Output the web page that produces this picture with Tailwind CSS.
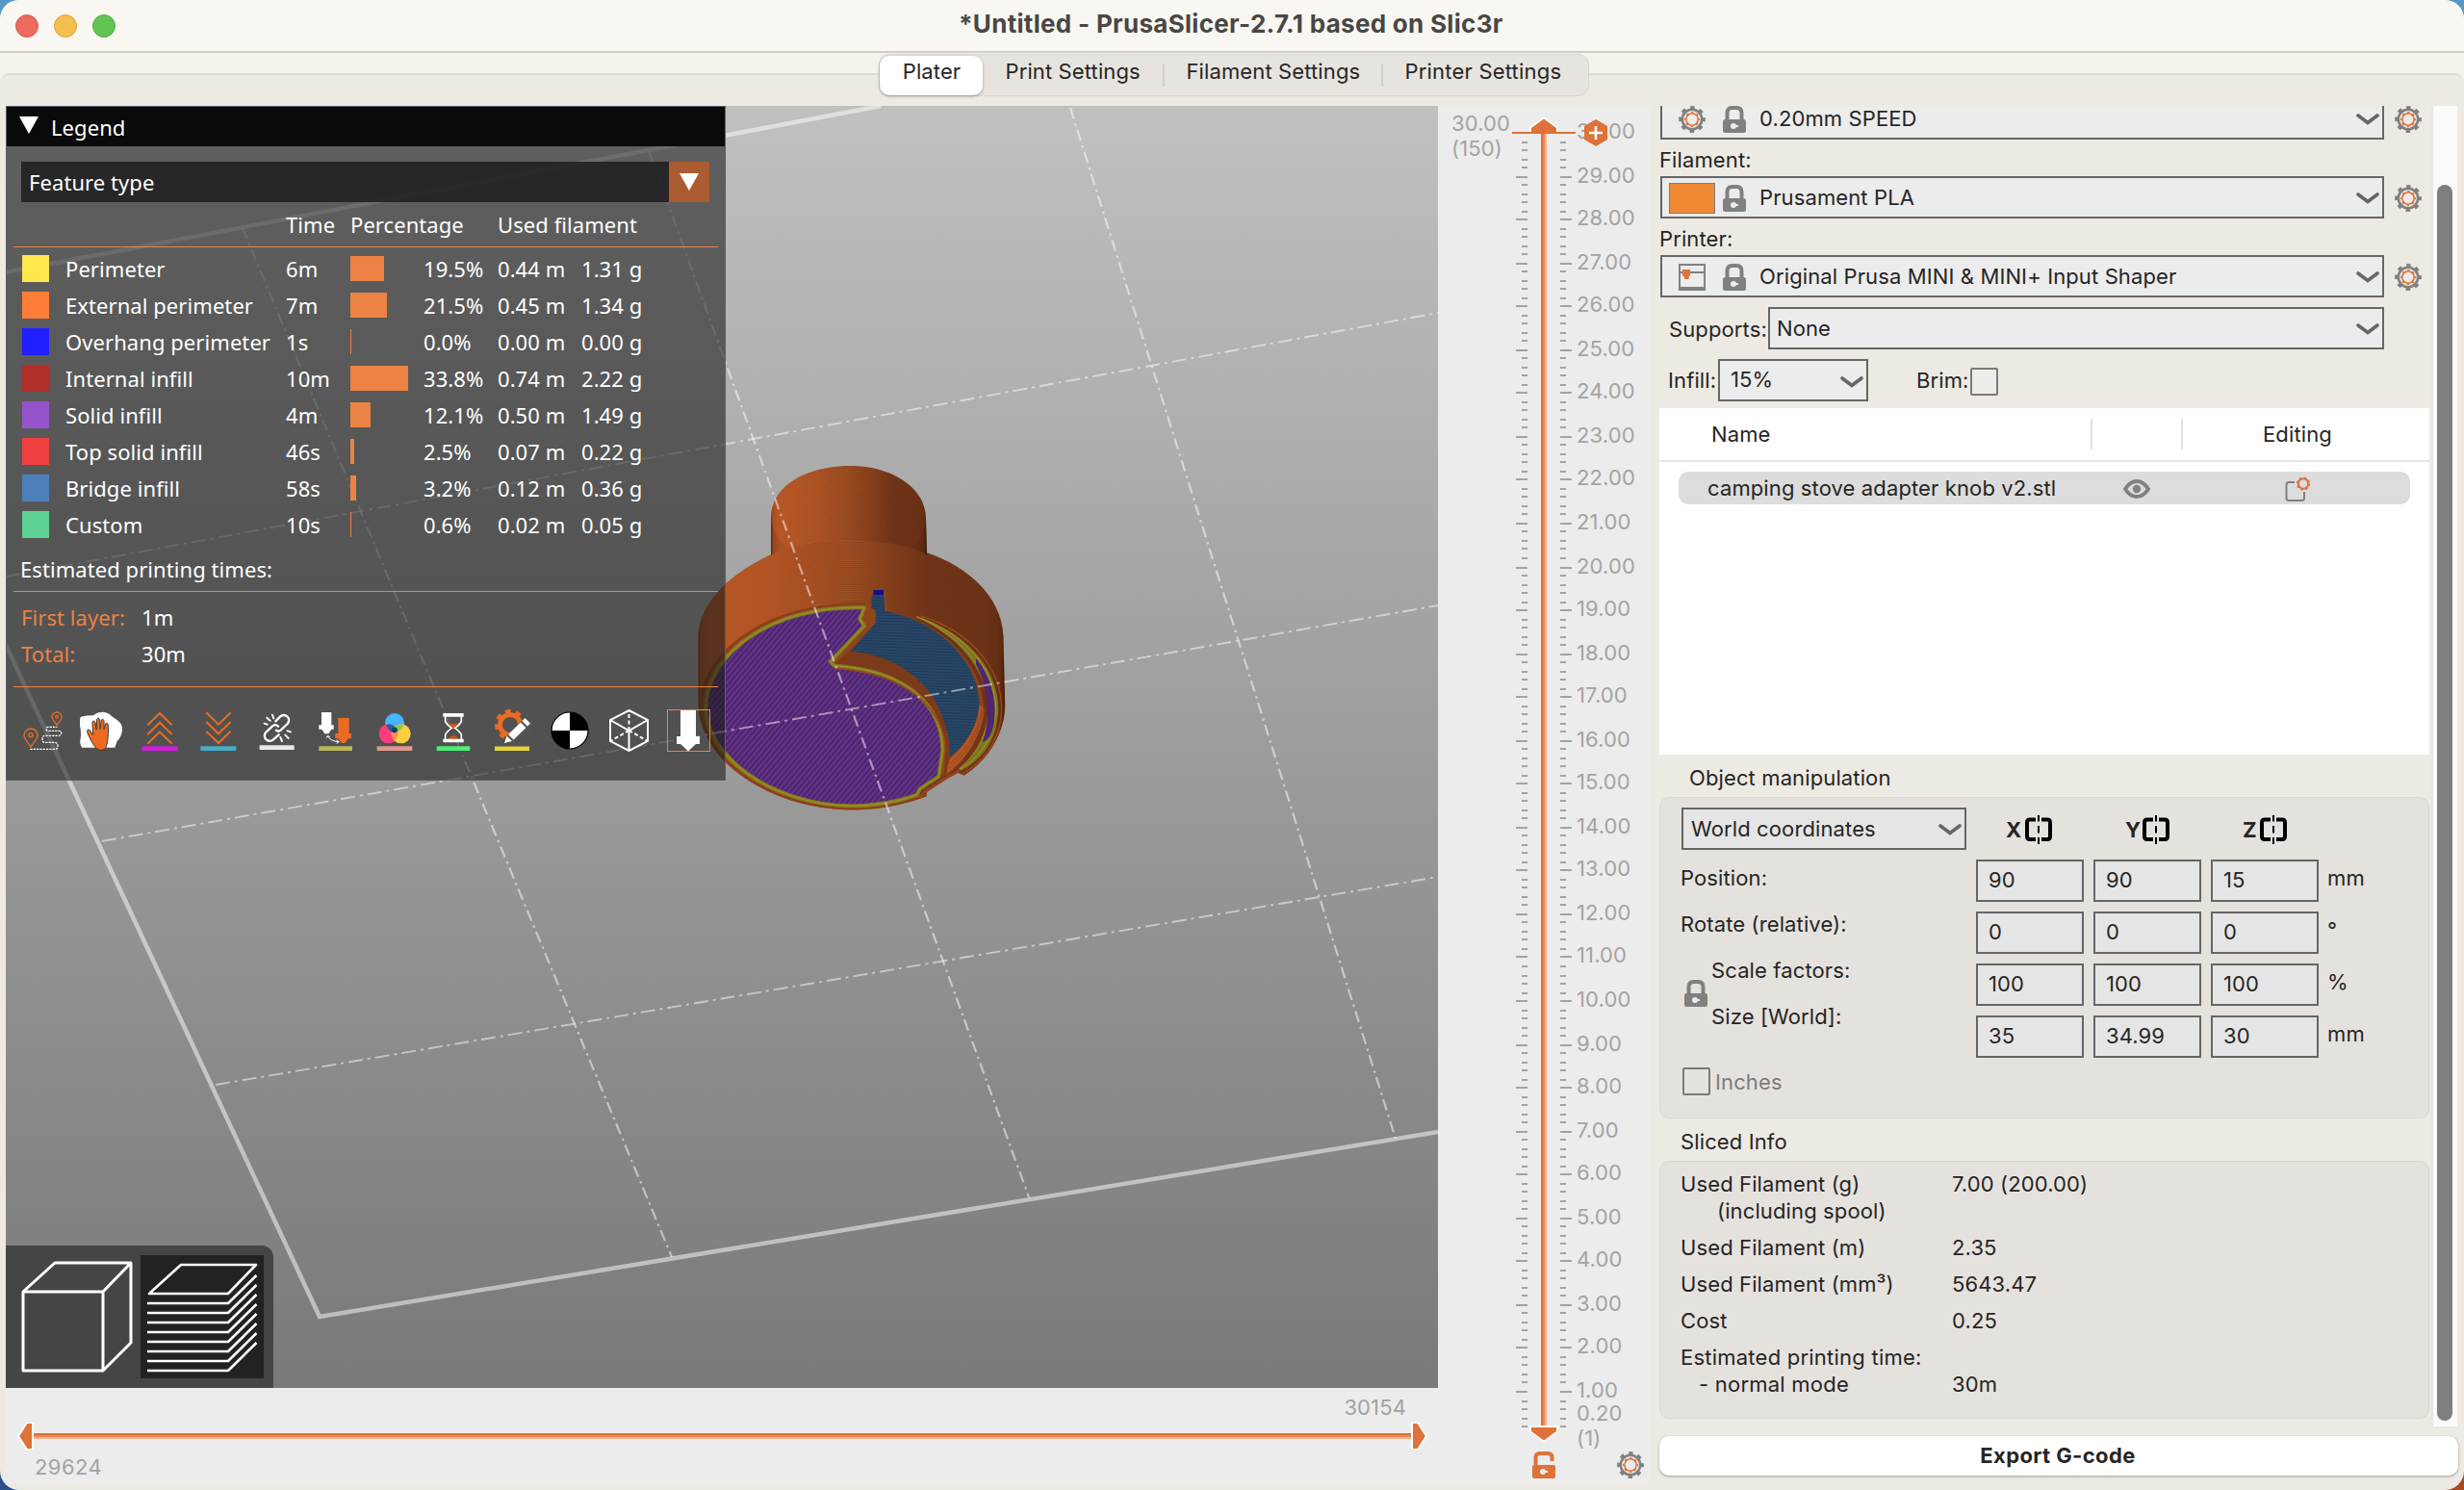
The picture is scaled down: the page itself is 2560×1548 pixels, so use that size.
<!DOCTYPE html>
<html lang="en">
<head>
<meta charset="utf-8">
<title>PrusaSlicer</title>
<script src="https://cdn.jsdelivr.net/npm/@tailwindcss/browser@4"></script>
</head>
<body class="w-[2560px] h-[1548px] overflow-hidden bg-[linear-gradient(180deg,#5797c8_50%,transparent_50%),linear-gradient(90deg,#2b4f86_50%,#a84a22_50%)] font-['Inter',sans-serif] text-[22px] tracking-[0.12px] text-[#262524]">
<svg class="hidden">
  <symbol id="gear" viewBox="0 0 28 28">
    <g fill="none">
      <circle cx="14" cy="14" r="10.2" stroke="#808080" stroke-width="2.6"/>
      <circle cx="14" cy="14" r="12.2" stroke="#808080" stroke-width="3.4" stroke-dasharray="4.4 5.18" stroke-dashoffset="2.2"/>
      <circle cx="14" cy="14" r="6.2" stroke="#de7238" stroke-width="1.5"/>
      <circle cx="14" cy="14" r="7.3" stroke="#de7238" stroke-width="1.4" stroke-dasharray="2.2 3.53" stroke-dashoffset="1.1"/>
    </g>
  </symbol>
  <symbol id="lock" viewBox="0 0 24 28">
    <path d="M4.5 15V7.5Q4.5 2 9.500 2H14.500Q19.500 2 19.500 7.500V15" fill="none" stroke="#808080" stroke-width="4"/>
    <rect y="14" width="24" height="14" rx="2.500" fill="#808080"/>
    <circle cx="11" cy="21" r="3" fill="#ececec"/><rect x="11" y="20" width="5" height="2" fill="#ececec"/>
  </symbol>
  <symbol id="chev" viewBox="0 0 24 12"><path d="M2 2l10 7.500L22 2" fill="none" stroke="#666" stroke-width="3.600" stroke-linecap="round"/></symbol>
  <symbol id="mirror" viewBox="0 0 28 30">
    <path d="M11 4.500H5Q2 4.500 2 7.500V22Q2 25 5 25H11M17 4.500H23Q26 4.500 26 7.500V22Q26 25 23 25H17" fill="none" stroke="#000" stroke-width="4"/>
    <path d="M14 0V6.500M14 11V18.500M14 23V30" stroke="#000" stroke-width="2"/>
  </symbol>
</svg>

<div class="flex h-[1548px] flex-col overflow-hidden rounded-[20px] bg-[#edeae4]">
  <header class="flex h-[55px] shrink-0 items-center border-b-2 border-[#d0cdc8] bg-[#faf7f2] pl-4">
    <div class="flex w-[980px] gap-4">
      <span class="size-6 rounded-full border border-[#d9574b] bg-[#ed6a5e]"></span>
      <span class="size-6 rounded-full border border-[#daa23b] bg-[#f5bf4f]"></span>
      <span class="size-6 rounded-full border border-[#4fab42] bg-[#61c554]"></span>
    </div>
    <h1 class="mb-1 text-[26px] leading-[48px] font-bold tracking-[0.3px] whitespace-nowrap text-[#484745]">*Untitled - PrusaSlicer-2.7.1 based on Slic3r</h1>
  </header>
  <nav class="flex h-[55px] shrink-0 flex-col bg-[#f5f2ec] pt-[21px]">
    <div class="flex h-[34px] justify-center rounded-t-[10px] border-t-2 border-[#dfdcd6] bg-[#edeae4]">
      <div class="-mt-[22px] ml-[3px] flex h-[44px] w-[738px] rounded-[11px] border border-[#dad7d2] bg-[#e7e4df]">
        <div class="mt-px flex h-[41px] w-[107px] justify-center rounded-[10px] bg-white pl-[2px] leading-[32px] shadow-[0_1px_3px_rgba(0,0,0,0.35)]">Plater</div>
        <div class="ml-[24px] w-[163px] leading-[34px]">Print Settings</div>
        <div class="mt-[9px] h-6 w-[2px] bg-[#d3d0cb]"></div>
        <div class="ml-[23px] w-[202px] leading-[34px]">Filament Settings</div>
        <div class="mt-[9px] h-6 w-[2px] bg-[#d3d0cb]"></div>
        <div class="ml-[23px] leading-[34px] tracking-[0.2px]">Printer Settings</div>
      </div>
    </div>
  </nav>

  <main class="flex min-h-0 flex-1 pl-[6px]">
    <!-- 3D preview with move slider -->
    <section class="flex h-[1432px] w-[1488px] shrink-0 flex-col bg-[#ececec]">
      <div class="relative h-[1332px] overflow-hidden">
        <svg class="block" width="1488" height="1332" viewBox="6 110 1488 1332">
          <defs>
            <linearGradient id="bg" x1="0" y1="0" x2="0" y2="1"><stop offset="0" stop-color="#c0c0c0"/><stop offset="1" stop-color="#797979"/></linearGradient>
            <linearGradient id="neck" gradientUnits="userSpaceOnUse" x1="303" y1="0" x2="789" y2="0"><stop offset="0" stop-color="#c45d29"/><stop offset=".25" stop-color="#b75827"/><stop offset=".5" stop-color="#9f4d22"/><stop offset=".74" stop-color="#7d3b1b"/><stop offset=".76" stop-color="#743619"/><stop offset="1" stop-color="#723518"/></linearGradient>
            <linearGradient id="body" gradientUnits="userSpaceOnUse" x1="76" y1="0" x2="1033" y2="0"><stop offset="0" stop-color="#c45d29"/><stop offset=".25" stop-color="#ba5827"/><stop offset=".5" stop-color="#a04e22"/><stop offset=".68" stop-color="#803c1b"/><stop offset=".76" stop-color="#743619"/><stop offset="1" stop-color="#723518"/></linearGradient>
            <pattern id="hatch" width="13" height="13" patternUnits="userSpaceOnUse" patternTransform="rotate(-50)"><rect width="13" height="13" fill="#63338a"/><rect width="13" height="6" fill="#4a2468"/></pattern>
            <pattern id="hatchb" width="12" height="9" patternUnits="userSpaceOnUse" patternTransform="rotate(2)"><rect width="12" height="9" fill="#284665"/><rect width="12" height="3" fill="#203b59"/></pattern>
            <clipPath id="cn"><path d="M303 350V230C305 130 420 72 550 72S785 140 786 235L789 350C700 290 400 290 303 350Z"/></clipPath>
            <clipPath id="cb"><path id="bp" d="M76 600C82 510 150 420 305 347C400 290 700 290 789 343C930 390 1022 490 1027 600L1033 820C1030 905 985 985 905 1037L886 1028L790 1078L788 1102C710 1132 630 1145 550 1145C300 1140 85 980 76 820Z"/></clipPath>
          </defs>
          <rect x="6" y="110" width="1488" height="1332" fill="url(#bg)"/>
          <g fill="none" stroke="#fff" stroke-opacity=".5" stroke-width="4.500">
            <path d="M6 283L915 110M6 670L332 1368L1494 1176"/>
          </g>
          <g transform="translate(700 460) scale(.33333)">
            <use href="#bp" fill="url(#body)"/>
            <g id="bodyArcs" clip-path="url(#cb)" fill="none" stroke="#000" stroke-opacity=".16" stroke-width="2"></g>
            <path d="M303 350V230C305 130 420 72 550 72S785 140 786 235L789 350C700 290 400 290 303 350Z" fill="url(#neck)"/>
            <g id="neckArcs" clip-path="url(#cn)" fill="none" stroke="#000" stroke-opacity=".16" stroke-width="2"></g>
            <!-- rim of the bottom face -->
            <path d="M600 503C300 495 85 650 84 830C90 980 290 1138 553 1138C640 1138 720 1122 786 1098" fill="none" stroke="#8a4019" stroke-width="10"/>
            <path d="M600 508C300 500 92 655 90 830C96 975 290 1133 553 1134C640 1134 720 1118 782 1092" fill="none" stroke="#a04b20" stroke-width="3"/>
            <!-- cut-out -->
            <path d="M617 478L657 476L660 523C830 555 970 690 965 830C960 910 915 990 850 1038L830 1035L498 690L629 562L629 522L612 515Z" fill="#8a4119"/>
            <path d="M617 478L657 476L659 525C830 555 952 690 952 810C950 880 910 940 860 982C865 850 780 670 550 650L629 562V522L616 515Z" fill="url(#hatchb)"/>
            <path d="M858 986C910 944 950 885 953 815L968 830C962 905 915 985 850 1032Z" fill="#b25626"/>
            <path d="M862 1000C915 955 950 900 960 830M858 1015C915 970 955 905 965 830" stroke="#803c1a" stroke-width="2" fill="none"/>
            <path d="M498 690L550 650C780 670 865 850 860 982L848 1032L836 1028C852 850 740 700 498 690Z" fill="#7b3a1a"/>
            <path d="M592 512L612 515L629 528V560L500 690L492 678L592 570L580 548Z" fill="#8f451c"/>
            <path d="M620 462L657 470L662 523" fill="none" stroke="#a54e22" stroke-width="3"/>
            <rect x="622" y="459" width="32" height="16" fill="#11118c"/>
            <!-- bottom solid infill with its perimeter -->
            <path d="M594 514C300 505 102 660 100 828C104 975 300 1128 553 1132C630 1132 700 1118 757 1098L768 1078L826 1040L838 960C838 830 740 710 500 695L488 682L594 571L580 550Z" fill="url(#hatch)" stroke="#857a20" stroke-width="12" stroke-linejoin="round"/>
            <path d="M594 514C300 505 102 660 100 828C104 975 300 1128 553 1132C630 1132 700 1118 757 1098L768 1078L826 1040L838 960C838 830 740 710 500 695L488 682L594 571L580 550Z" fill="none" stroke="#a39a2c" stroke-width="2.500" stroke-linejoin="round"/>
            <path d="M500 703C730 715 850 840 846 960L838 1036" fill="none" stroke="#96471d" stroke-width="5"/>
            <path d="M776 1092L850 1044L890 1022" stroke="#8f441c" stroke-width="9" fill="none"/>
            <!-- outer crescent -->
            <path d="M757 542C910 590 1010 700 1012 830C1008 925 965 985 895 1022L888 1016C945 975 985 900 978 800C960 690 880 600 757 542Z" fill="#7f7521"/>
            <path d="M757 542C905 592 1000 700 1004 830C1000 915 960 975 893 1018" fill="none" stroke="#a39a2c" stroke-width="3"/>
            <path d="M757 542C890 602 968 690 984 800C988 890 950 965 890 1016" fill="none" stroke="#a39a2c" stroke-width="2.500"/>
            <path d="M942 672C985 720 1005 800 1000 850C1000 890 985 930 962 932C985 880 985 770 942 690Z" fill="#4f2570"/>
            <path d="M770 540C920 585 1022 700 1022 830C1018 925 975 990 900 1032" fill="none" stroke="#9b481f" stroke-width="4"/>
          </g>
          <g fill="none" stroke="#fff" stroke-opacity=".5" stroke-width="2.200" stroke-dasharray="12 5 2.500 4.500">
            <path d="M252 237L698 1306M674 157L1069 1244M1112 112L1450 1183"/>
            <path d="M6 599L1494 325M106 874L1494 629M224 1127L1494 911" stroke-width="1.900" stroke-dasharray="15 5 3 5"/>
          </g>
        </svg>

        <!-- legend -->
        <div class="absolute top-0 left-0 flex h-[701px] w-[748px] flex-col border border-[#5d5d68] bg-[rgba(26,26,26,0.58)] font-['Noto_Sans',sans-serif] tracking-[0.07px] text-white">
          <div class="flex h-[41px] shrink-0 items-center gap-[13px] bg-[#0a0a0a] pl-[13px]">
            <svg class="mb-1" width="20" height="18"><path d="M0 0h20L10 18z" fill="#fff"/></svg>
            <span class="leading-[38px]">Legend</span>
          </div>
          <div class="mt-4 ml-[15px] flex h-[42px] w-[715px] shrink-0 bg-[rgba(32,32,32,0.88)]">
            <span class="flex-1 pl-[8px] leading-[42px]">Feature type</span>
            <span class="flex w-[42px] items-center justify-center bg-[#ab5c30]"><svg class="mb-px" width="20" height="18"><path d="M0 0h20L10 18z" fill="#fff"/></svg></span>
          </div>
          <div class="mt-[5px] grid h-[38px] shrink-0 grid-cols-[43px_231px_67px_153px_1fr] pl-4 leading-[36px]">
            <span class="col-start-3">Time</span><span>Percentage</span><span>Used filament</span>
          </div>
          <div class="mt-[3px] ml-[7px] h-px w-[732px] shrink-0 bg-[#ec8244]"></div>
          <div id="rows" class="mt-[3px] shrink-0"></div>
          <div class="mt-2 shrink-0 pl-[14px] leading-[38px]">Estimated printing times:</div>
          <div class="mt-[4px] ml-[7px] h-px w-[732px] shrink-0 bg-[#ec8244]"></div>
          <div class="mt-[7px] grid shrink-0 grid-cols-[125px_1fr] pl-[15px] leading-[38px]">
            <span class="text-[#ec8244]">First layer:</span><span>1m</span>
            <span class="text-[#ec8244]">Total:</span><span>30m</span>
          </div>
          <div class="mt-[15px] ml-[7px] h-px w-[732px] shrink-0 bg-[#ec8244]"></div>
          <div class="mt-[23px] ml-[15px] flex shrink-0 gap-[17px]">
            <svg width="44" height="44" viewBox="24 39 132 132" fill="none" stroke-width="4">
              <path d="M54 156C46 142 33 132 33 119A21 20 0 0 1 75 119C75 132 62 142 54 156ZM135 88C130 78 120 72 120 63A15 15 0 0 1 150 63C150 72 140 78 135 88Z" stroke="#ed6b21"/>
              <circle cx="54" cy="119" r="6" stroke="#ed6b21"/><circle cx="135" cy="62" r="4" stroke="#ed6b21"/>
              <path d="M52 163H130Q138 163 138 153T128 142H98Q90 142 90 131T100 121H140Q149 121 149 113T140 106H108Q102 106 102 100T108 94H136" stroke="#fff" stroke-dasharray="7 3"/>
            </svg>
            <svg width="44" height="44" viewBox="209 39 132 132">
              <path d="M212 62Q230 58 250 58Q275 40 300 53Q310 62 325 72Q345 85 340 110Q335 130 325 138L318 158H216Q208 150 210 135Q215 115 209 90Q206 70 212 62Z" fill="#fff"/>
              <path d="M262 163C250 150 240 130 232 110Q230 100 239 103L250 118L248 80Q250 70 257 79L260 102L262 70Q266 62 271 70L272 101L276 72Q281 66 284 74V102L288 84Q294 78 297 86C298 110 298 140 288 163Q275 170 262 163Z" fill="#ed6b21" stroke="#3a3a3a" stroke-width="3"/>
            </svg>
            <svg width="44" height="44" viewBox="392 39 132 132"><path d="M420 88L458 51L496 88M420 117L458 80L496 117M420 146L458 109L496 146" fill="none" stroke="#ed6b21" stroke-width="6"/><path d="M402 154H514V168H402Z" fill="#cb20d6"/></svg>
            <svg width="44" height="44" viewBox="575 39 132 132"><path d="M603 49L641 86L679 49M603 78L641 115L679 78M603 107L641 144L679 107" fill="none" stroke="#ed6b21" stroke-width="6"/><path d="M585 154H696V168H585Z" fill="#49acc9"/></svg>
            <svg width="44" height="44" viewBox="757 39 132 132" fill="none" stroke="#fff" stroke-width="7" stroke-linecap="round">
              <path d="M818 76L832 62A15 15 0 0 1 855 84L834 104Q826 110 820 104M826 92Q818 84 810 90L790 108A15 15 0 0 0 810 134L828 118"/>
              <path d="M808 56L812 67M791 65L801 74M783 83L792 86M855 106L865 109M848 119L858 129M833 126L838 138" stroke-width="6"/>
              <path d="M768 158H876" stroke="#ebe8ea" stroke-width="14" stroke-linecap="butt"/>
            </svg>
            <svg width="44" height="44" viewBox="942 39 132 132"><path d="M963 48H994V88H1001V101H994L985 115H973L964 101H955V88H963Z" fill="#fff"/><path d="M1015 66H1049V114H1056V130H1046L1036 144H1026L1016 130H1006V114H1015Z" fill="#ed6b21"/><path d="M982 123Q992 138 1016 140M979 128L982 121L990 125M1010 134L1018 140L1010 145" fill="none" stroke="#fff" stroke-width="3"/><path d="M955 154H1059V168H955Z" fill="#b9b858"/></svg>
            <svg width="44" height="44" viewBox="1124 39 132 132"><circle cx="1190" cy="81" r="30" fill="#47b5ff"/><circle cx="1171" cy="115" r="30" fill="#ff3d7d"/><circle cx="1210" cy="115" r="30" fill="#ffcf3f"/><path d="M1190 90Q1200 100 1201 114Q1196 130 1190 137Q1180 128 1180 114Q1181 100 1190 90Z" fill="#ff8b58"/><path d="M1163 88Q1180 80 1195 97L1190 111Q1175 112 1163 88Z" fill="#17679c"/><path d="M1218 88Q1200 82 1188 94L1192 110Q1210 110 1218 88Z" fill="#8dc653"/><circle cx="1190" cy="103" r="8.500" fill="#113b57"/><path d="M1135 154H1245V168H1135Z" fill="#e09a8b"/></svg>
            <svg width="44" height="44" viewBox="1307 39 132 132"><path d="M1353 81Q1373 88 1393 81L1374 97ZM1356 131Q1373 112 1390 131Z" fill="#e0531a"/><path d="M1348 60V76Q1352 86 1368 97Q1352 108 1348 118V133M1398 60V76Q1394 86 1378 97Q1394 108 1398 118V133" fill="none" stroke="#fff" stroke-width="5"/><path d="M1341 51H1405V62H1341ZM1341 131H1405V142H1341Z" fill="#fff"/><path d="M1321 154H1425V168H1321Z" fill="#4fee78"/></svg>
            <svg width="44" height="44" viewBox="0 0 44 44"><circle cx="20" cy="16" r="10.500" fill="none" stroke="#ed6b21" stroke-width="5" stroke-dasharray="49 17" stroke-dashoffset="-17" /><circle cx="20" cy="16" r="14" fill="none" stroke="#ed6b21" stroke-width="4" stroke-dasharray="5.500 5.500" stroke-dashoffset="-17" pathLength="88"/><path d="M14 36L16.500 27L33 11L44 10L40 24L22 36Z" fill="#545454"/><path d="M14 35L16.500 27.500L22 33ZM18 26L31 13.500L36.500 19L23.500 31.500ZM32.500 12L35.500 9L41 14.500L38 17.500Z" fill="#fff"/><path d="M4 38.500H40V43H4Z" fill="#e6d239"/></svg>
            <svg width="44" height="44" viewBox="0 0 44 44"><circle cx="21" cy="22" r="19" fill="#000"/><path d="M21 22V3A19 19 0 0 0 2 22ZM21 22V41A19 19 0 0 0 40 22Z" fill="#fff"/><circle cx="21" cy="22" r="19" fill="none" stroke="#000" stroke-width="1.200"/></svg>
            <svg width="44" height="44" viewBox="0 0 44 44" fill="none" stroke="#fff" stroke-width="2"><path d="M21.500 1L41 11V33L21.500 43L2 33V11ZM2 11L21.500 22L41 11M21.500 22V43"/><path d="M21.500 22V1M21.500 22L2 33M21.500 22L41 33" stroke-dasharray="4 2.500"/></svg>
            <svg width="45" height="44" viewBox="0 0 45 44"><rect x=".5" y=".5" width="44" height="43" fill="none" stroke="#ec8244"/><path d="M14 1H30V28H34V36H30L22 43.500L14 36H10V28H14Z" fill="#fff"/></svg>
          </div>
        </div>

        <!-- view switch -->
        <div class="absolute bottom-0 left-0 flex h-[148px] w-[278px] gap-[10px] rounded-tr-[12px] bg-[#454545] pt-[10px] pl-[12px]">
          <svg width="118" height="128" viewBox="18 1304 118 128" overflow="visible" fill="none" stroke="#fff" stroke-width="3" stroke-linejoin="round"><path d="M24 1342H107V1424H24ZM24 1342L57 1312H136V1395L107 1424M107 1342L136 1312"/></svg>
          <div class="h-[128px] w-[128px] bg-[#222]">
            <svg width="128" height="128" viewBox="146 1304 128 128" fill="none" stroke="#fff" stroke-width="2.600" stroke-linejoin="round"><path d="M155 1344L188 1314H266L237 1344Z"/><path d="M153 1354H237L266.500 1325M153 1364H237L266.500 1335M153 1374H237L266.500 1345M153 1384H237L266.500 1355M153 1394H237L266.500 1365M153 1404H237L266.500 1375M153 1414H237L266.500 1385M153 1424H237L266.500 1395"/></svg>
          </div>
        </div>
      </div>

      <div class="flex flex-1 flex-col text-[#a3a3a3]">
        <div class="h-[36px] pr-[33px] text-right leading-[40px]">30154</div>
        <svg class="block" width="1488" height="28" viewBox="6 1478 1488 28">
          <path d="M34 1489H1468V1491H34Z" fill="#de7238"/><path d="M34 1491H1468V1493H34Z" fill="#ee8850"/><path d="M34 1493H1468V1495H34Z" fill="#f9b592"/>
          <g fill="#de7238" stroke="#fff" stroke-width="2"><path d="M34 1478V1506H28L19 1492L28 1478ZM1467 1478V1506H1473L1482 1492L1473 1478Z"/></g>
        </svg>
        <div class="pl-[30px] leading-[36px] tracking-[0.43px]">29624</div>
      </div>
    </section>

    <!-- layer slider -->
    <section class="h-[1432px] w-[220px] shrink-0 bg-[#ececec]">
      <svg class="block" width="220" height="1432" viewBox="1494 110 220 1432">
        <g id="ticks"></g>
        <path d="M1601 138h2V1482h-2Z" fill="#de7238"/><path d="M1603 138h2V1482h-2Z" fill="#ee8850"/><path d="M1605 138h2V1482h-2Z" fill="#f9b592"/>
        <path d="M1589 1481H1619V1488L1604 1498L1589 1488Z" fill="#fff"/><path d="M1591 1483H1617V1487L1604 1496.500L1591 1487Z" fill="#de7238"/>
        <path d="M1589 137V132L1604 121.500L1619 132V137Z" fill="#fff"/><path d="M1591 138V133L1604 123.500L1617 133V138Z" fill="#de7238"/>
        <path d="M1571 137H1637V139H1571Z" fill="#de7238"/>
        <path d="M1658 124L1670 131V145L1658 152L1646 145V131Z" fill="#de7238"/><path d="M1651 138H1665M1658 131V145" stroke="#fff" stroke-width="2.600"/>
        <g fill="#a3a3a3"><text x="1508" y="136">30.00</text><text x="1508" y="162">(150)</text><text x="1638" y="1476">0.20</text><text x="1638" y="1502">(1)</text></g>
        <path d="M1595.500 1522V1514Q1595.500 1510 1600 1510H1608Q1612.500 1510 1612.500 1514V1518" fill="none" stroke="#de7238" stroke-width="4"/><rect x="1592" y="1522" width="24" height="14" rx="2" fill="#de7238"/><circle cx="1603" cy="1529" r="3" fill="#ececec"/><path d="M1603 1528h5v2h-5z" fill="#ececec"/>
        <use href="#gear" x="1680" y="1508" width="28" height="28"/>
      </svg>
    </section>

    <!-- sidebar -->
    <aside class="flex flex-1 flex-col pl-[10px]">
      <div class="flex h-[1372px] shrink-0 overflow-hidden">
        <div class="-mt-[9px] flex w-[802px] shrink-0 flex-col">
          <div class="ml-px flex h-[44px] shrink-0 items-center gap-[11px]">
            <div class="flex h-[44px] w-[752px] items-center border-2 border-[#666] bg-[#ececec] pr-[3px] pl-[17px]">
              <svg class="mt-[2px] mr-[18px] size-7"><use href="#gear"/></svg><svg class="mt-[2px] h-7 w-6"><use href="#lock"/></svg>
              <span class="flex-1 pl-[14px] leading-[42px]">0.20mm SPEED</span><svg class="mt-[2px] h-3 w-6"><use href="#chev"/></svg>
            </div>
            <svg class="mt-[2px] size-7"><use href="#gear"/></svg>
          </div>
          <div class="h-[38px] shrink-0 leading-[42px]">Filament:</div>
          <div class="ml-px flex h-[44px] shrink-0 items-center gap-[11px]">
            <div class="flex h-[44px] w-[752px] items-center border-2 border-[#666] bg-[#ececec] pr-[3px] pl-[7px]">
              <span class="mt-[2px] mr-[8px] h-8 w-12 border border-[#7d7d7d] bg-[#f08933]"></span><svg class="mt-[2px] h-7 w-6"><use href="#lock"/></svg>
              <span class="flex-1 pl-[14px] leading-[42px]">Prusament PLA</span><svg class="mt-[2px] h-3 w-6"><use href="#chev"/></svg>
            </div>
            <svg class="mt-[2px] size-7"><use href="#gear"/></svg>
          </div>
          <div class="h-[38px] shrink-0 leading-[42px]">Printer:</div>
          <div class="ml-px flex h-[44px] shrink-0 items-center gap-[11px]">
            <div class="flex h-[44px] w-[752px] items-center border-2 border-[#666] bg-[#ececec] pr-[3px] pl-[17px]">
              <svg class="mt-[2px] mr-[18px] size-7" viewBox="0 0 28 28"><path d="M1 1H27V27H1ZM1 9H27" fill="none" stroke="#808080" stroke-width="2"/><path d="M0 24H28V28H0Z" fill="#808080"/><path d="M4 6H12V12L10.500 14V16H6V14L4 12Z" fill="#de7238"/></svg><svg class="mt-[2px] h-7 w-6"><use href="#lock"/></svg>
              <span class="flex-1 pl-[14px] leading-[42px]">Original Prusa MINI &amp; MINI+ Input Shaper</span><svg class="mt-[2px] h-3 w-6"><use href="#chev"/></svg>
            </div>
            <svg class="mt-[2px] size-7"><use href="#gear"/></svg>
          </div>
          <div class="mt-[10px] flex h-[44px] shrink-0 pl-[10px]">
            <span class="w-[103px] leading-[46px]">Supports:</span>
            <div class="flex w-[640px] items-center border-2 border-[#666] bg-[#ececec] pr-[3px] pl-[7px]">
              <span class="flex-1 leading-[42px]">None</span><svg class="mt-[2px] h-3 w-6"><use href="#chev"/></svg>
            </div>
          </div>
          <div class="mt-[10px] flex h-[44px] shrink-0 items-start pl-[9px]">
            <span class="w-[52px] leading-[45px]">Infill:</span>
            <div class="flex h-[44px] w-[156px] items-start border-2 border-[#666] bg-[#ececec] pr-[3px] pl-[11px]">
              <span class="flex-1 leading-[38px]">15%</span><svg class="mt-[16px] h-3 w-6"><use href="#chev"/></svg>
            </div>
            <span class="ml-[50px] w-[56px] leading-[45px]">Brim:</span>
            <span class="mt-[9px] size-[29px] rounded-[2px] border-2 border-[#7b7a79] bg-[#efedea]"></span>
          </div>
          <div class="mt-[7px] flex h-[360px] w-[800px] shrink-0 flex-col bg-white">
            <div class="flex h-[56px] shrink-0 items-center border-b-2 border-[#e5e5e5]">
              <span class="w-[448px] pl-[54px]">Name</span>
              <span class="h-8 w-[2px] bg-[#e0e0e0]"></span>
              <span class="ml-[92px] h-8 w-[2px] bg-[#e0e0e0]"></span>
              <span class="ml-[83px]">Editing</span>
            </div>
            <div class="mx-5 mt-[10px] flex h-[34px] items-center rounded-[10px] bg-[#dcdcdc] pl-[30px]">
              <span class="w-[432px] leading-[34px]">camping stove adapter knob v2.stl</span>
              <svg class="mt-[2px]" width="28" height="20" viewBox="0 0 28 20"><path d="M2 10Q7 2 14 2T26 10Q21 18 14 18T2 10Z" fill="none" stroke="#808080" stroke-width="3.800"/><circle cx="14" cy="10" r="4.200" fill="#808080"/></svg>
              <svg class="mt-[3px] ml-[140px]" width="27" height="27" viewBox="0 0 27 27" fill="none"><path d="M10 6H4Q1.500 6 1.500 8.500V22.500Q1.500 25 4 25H17.500Q20 25 20 22.500V16" stroke="#808080" stroke-width="2"/><circle cx="19" cy="7.500" r="5.200" stroke="#de7238" stroke-width="2"/><circle cx="19" cy="7.500" r="6.400" stroke="#de7238" stroke-width="1.400" stroke-dasharray="2.500 2.520"/></svg>
            </div>
          </div>
          <div class="h-[44px] shrink-0 pl-[31px] leading-[48px]">Object manipulation</div>
          <div class="flex h-[334px] w-[800px] shrink-0 rounded-[10px] border border-[#dad7d1] bg-[#e5e2de] pt-[10px] pl-[22px]">
            <div class="w-[306px]">
              <div class="flex h-[44px] w-[296px] items-center border-2 border-[#666] bg-[#e5e5e5] pr-[3px] pl-[8px]">
                <span class="flex-1 leading-[42px]">World coordinates</span><svg class="mt-[2px] h-3 w-6"><use href="#chev"/></svg>
              </div>
              <div class="mt-[5px] -ml-px leading-[48px]">Position:</div>
              <div class="-ml-px leading-[48px]">Rotate (relative):</div>
              <div class="flex items-center gap-[4px]">
                <svg class="ml-[3px] h-7 w-6"><use href="#lock"/></svg>
                <div class="leading-[48px]">Scale factors:<br>Size [World]:</div>
              </div>
              <div class="mt-[29px] flex items-center gap-[5px] text-[#7d7b79]"><span class="ml-px size-[29px] rounded-[2px] border-2 border-[#7b7a79]"></span><span class="leading-[28px]">Inches</span></div>
            </div>
            <div>
              <div class="flex h-[44px] font-bold leading-[46px]">
                <div class="flex w-[122px] gap-[4px] pl-[31px]">X<svg class="mt-2 h-[30px] w-7"><use href="#mirror"/></svg></div>
                <div class="flex w-[122px] gap-[2px] pl-[33px]">Y<svg class="mt-2 h-[30px] w-7"><use href="#mirror"/></svg></div>
                <div class="flex w-[122px] gap-[3px] pl-[33px]">Z<svg class="mt-2 h-[30px] w-7"><use href="#mirror"/></svg></div>
              </div>
              <div id="fields"></div>
            </div>
          </div>
          <div class="h-[44px] shrink-0 pl-[22px] leading-[48px]">Sliced Info</div>
          <div class="grid h-[268px] w-[800px] shrink-0 grid-cols-[282px_1fr] content-start gap-y-[10px] rounded-[10px] border border-[#dad7d1] bg-[#e5e2de] pt-[9px] pl-[21px] leading-[28px]">
            <div>Used Filament (g)<br><span class="pl-[38px]">(including spool)</span></div><div>7.00 (200.00)</div>
            <div>Used Filament (m)</div><div>2.35</div>
            <div>Used Filament (mm³)</div><div>5643.47</div>
            <div>Cost</div><div>0.25</div>
            <div class="tracking-[0.23px]">Estimated printing time:<br><span class="pl-[19px]">- normal mode</span></div><div class="self-end">30m</div>
          </div>
        </div>
        <div class="w-[27px] border-l-2 border-[#e8e6e3] bg-[#fafafa] pt-[82px] pl-[4px]"><div class="h-[1284px] w-4 rounded-full bg-[#7f7f7f]"></div></div>
      </div>
      <button class="mt-[10px] h-[41px] w-[830px] rounded-[10px] bg-white pr-[2px] leading-[41px] font-bold tracking-[0.4px] shadow-[0_1px_3px_rgba(0,0,0,0.35)]">Export G-code</button>
    </aside>
  </main>
</div>

<script>
const features = [
  ['#ffe64d','Perimeter','6m',34.5,'19.5%','0.44 m','1.31 g'],
  ['#ff7d38','External perimeter','7m',38,'21.5%','0.45 m','1.34 g'],
  ['#1f1fff','Overhang perimeter','1s',1,'0.0%','0.00 m','0.00 g'],
  ['#b03029','Internal infill','10m',60,'33.8%','0.74 m','2.22 g'],
  ['#9654cc','Solid infill','4m',21,'12.1%','0.50 m','1.49 g'],
  ['#f04040','Top solid infill','46s',4,'2.5%','0.07 m','0.22 g'],
  ['#4d80ba','Bridge infill','58s',6,'3.2%','0.12 m','0.36 g'],
  ['#5ed194','Custom','10s',1,'0.6%','0.02 m','0.05 g']];
document.getElementById('rows').innerHTML = features.map(([c,n,t,w,p,m,g]) =>
  `<div class="grid h-[38px] grid-cols-[45px_229px_67px_76px_77px_87px_1fr] items-center pl-4 leading-[38px] whitespace-nowrap">
    <span class="size-7" style="background:${c}"></span><span>${n}</span><span>${t}</span>
    <span class="h-[26px] bg-[#ec8244]" style="width:${w}px"></span><span>${p}</span><span>${m}</span><span>${g}</span></div>`).join('');

document.getElementById('fields').innerHTML = [['90','90','15','mm'],['0','0','0','°'],['100','100','100','%'],['35','34.99','30','mm']].map(r =>
  `<div class="mt-[10px] flex h-[44px] gap-[10px]">${r.slice(0,3).map(v => `<span class="w-[112px] border-2 border-[#666] bg-[#e5e5e5] pl-[11px] leading-[38px]">${v}</span>`).join('')}<span class="-ml-px leading-[38px]">${r[3]}</span></div>`).join('');

// layer scale: one tick each 0.2 mm, a long labelled one each 1 mm
let ticks = '';
for (let i = 1; i <= 149; i++) {
  const y = 2 * Math.round((138 + i * 0.2 * 1308 / 29) / 2), long = i % 5 === 0;
  const a = long ? 1575 : 1581, b = long ? 1633 : 1627;
  ticks += `<path d="M${a} ${y}H1587M1621 ${y}H${b}" stroke="#a3a3a3" stroke-width="2"/>`;
}
for (let h = 30; h >= 1; h--) {
  const y = 2 * Math.round((138 + (30 - h) * 1308 / 29) / 2) + 6;
  ticks += `<text x="1638" y="${y}" fill="#a3a3a3">${h}.00</text>`;
}
// the add button covers the topmost label, so the scale is drawn first
document.getElementById('ticks').innerHTML = ticks;

// layer lines on the model
let n = '', b = '';
for (let i = 0; i < 50; i++) n += `<ellipse cx="546" cy="${232 + i * 6}" rx="243" ry="160"/>`;
for (let i = -20; i < 60; i++) b += `<path d="M76 ${620 + i * 6}A477 322 0 0 1 1030 ${620 + i * 6}"/>`;
document.getElementById('neckArcs').innerHTML = n;
document.getElementById('bodyArcs').innerHTML = b;
</script>
</body>
</html>
